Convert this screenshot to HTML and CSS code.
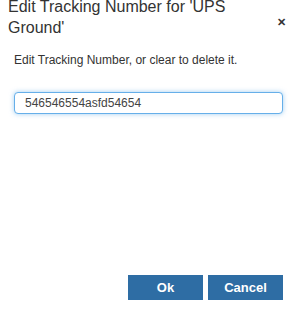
FILE: index.html
```html
<html lang="en">
<head>
    <meta charset="UTF-8">
    <meta name="viewport" content="width=device-width, initial-scale=1.0">
    <title>Edit Tracking Number</title>
    <link rel="stylesheet" href="styles.css">
</head>
<body>
    <div class="dialog">
        <div class="dialog-header">
            <h4 class="dialog-title">Edit Tracking Number for 'UPS Ground'</h4>
            <button class="close" title="Close">&#x2715;</button>
        </div>

        <div class="dialog-body">
            <p class="hint">Edit Tracking Number, or clear to delete it.</p>
            <input type="text" class="tracking-input" id="trackingInput" value="546546554asfd54654" autofocus>
        </div>

        <div class="dialog-footer">
            <button class="btn">Ok</button>
            <button class="btn">Cancel</button>
        </div>
    </div>
</body>
</html>
```

FILE: styles.css
```css
body {
    margin: 0;
    font-family: "Liberation Sans", Arial, sans-serif;
    color: #333;
    background-color: white;
}
.dialog {
    height: 320px;
    display: flex;
    flex-direction: column;
    overflow: hidden;
}
.dialog-header {
    display: flex;
    justify-content: space-between;
    align-items: flex-start;
    padding: 0 11px 0 8px;
    margin-top: -4px;
}
.dialog-title {
    margin: 0;
    max-width: 235px;
    font-size: 16px;
    line-height: 21px;
    font-weight: normal;
    color: #333;
}
.close {
    margin-top: 20px;
    padding: 0;
    border: none;
    background: none;
    font-size: 11px;
    font-weight: bold;
    color: #333;
    cursor: pointer;
}
.dialog-body {
    padding: 0 14px;
}
.hint {
    margin: 15px 0 25px 0;
    font-size: 12px;
}
.tracking-input {
    display: block;
    width: 100%;
    box-sizing: border-box;
    height: 22px;
    padding: 0 10px;
    border: 1px solid #66afe9;
    border-radius: 4px;
    box-shadow: 0 0 5px rgba(102, 175, 233, 0.6);
    outline: none;
    font-family: "Liberation Sans", Arial, sans-serif;
    font-size: 12px;
    color: #444;
}
.dialog-footer {
    margin-top: auto;
    display: flex;
    justify-content: flex-end;
    gap: 5px;
    padding: 0 14px 20px 14px;
}
.btn {
    width: 75px;
    height: 25px;
    border: none;
    background-color: #2e6da4;
    color: white;
    font-family: "Liberation Sans", Arial, sans-serif;
    font-size: 13px;
    font-weight: bold;
    cursor: pointer;
}
```
